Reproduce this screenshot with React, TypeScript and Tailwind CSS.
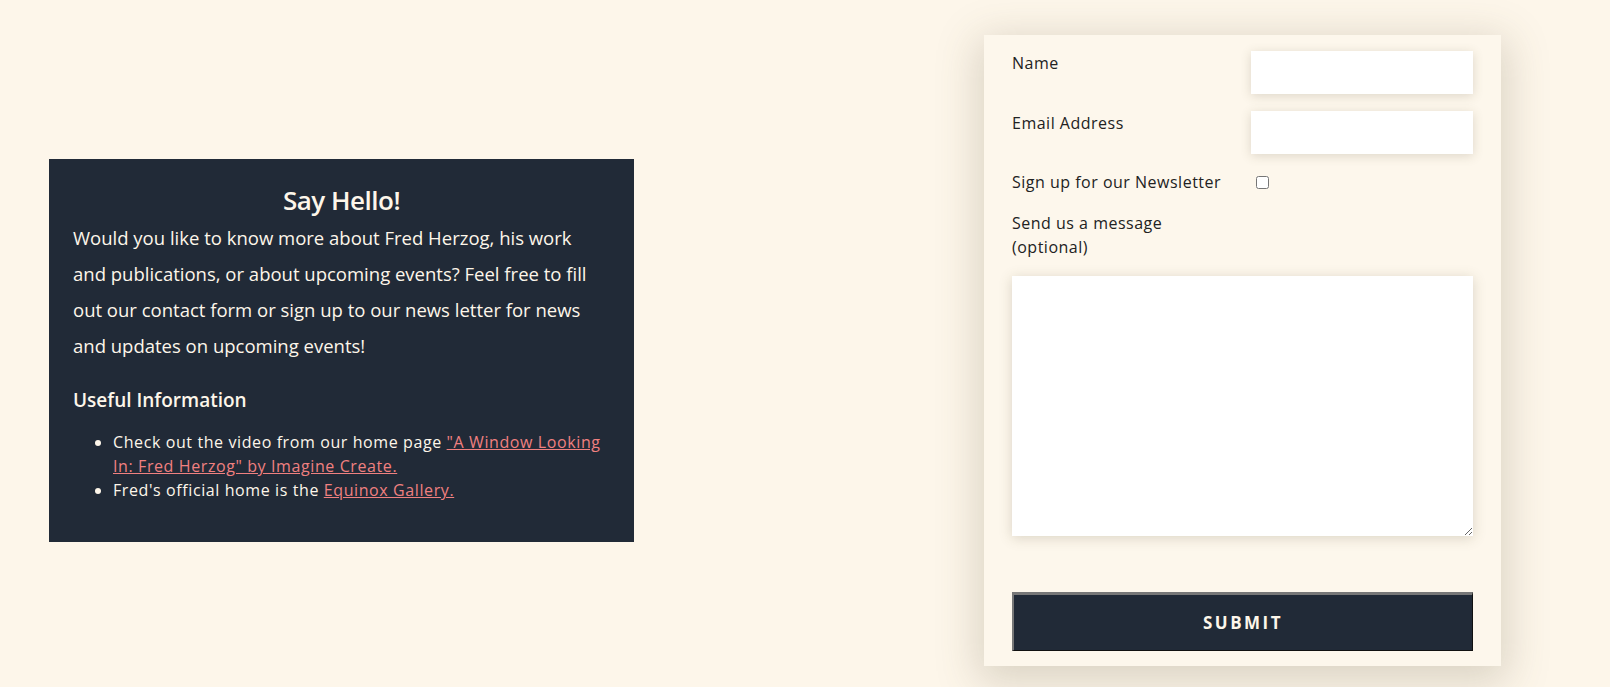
export default function App() {
  return (
    <div className="min-h-[687px] w-full bg-[#fdf6ea] flex items-center justify-between pl-[49px] pr-[109px] pt-[35px] pb-[22px] font-['Open_Sans',sans-serif]">
      <section className="w-[585px] bg-[#212a37] text-[#fdf6ea] px-[24px] pt-[23px] pb-[40px]">
        <h2 className="text-center text-[26px] font-semibold leading-[36px] tracking-[-0.5px]">
          Say Hello!
        </h2>
        <p className="max-w-[525px] text-[18.5px] leading-[36.2px] mt-[2px]">
          Would you like to know more about Fred Herzog, his work and
          publications, or about upcoming events? Feel free to fill out our
          contact form or sign up to our news letter for news and updates on
          upcoming events!
        </p>
        <h3 className="text-[19px] font-semibold mt-[22px] leading-[28px]">
          Useful Information
        </h3>
        <ul className="list-disc pl-[40px] mt-[16px] text-[16px] tracking-[0.6px] leading-[24px]">
          <li>
            Check out the video from our home page{" "}
            <a href="#" className="underline text-[#f08080]">
              "A Window Looking In: Fred Herzog" by Imagine Create.
            </a>
          </li>
          <li>
            Fred's official home is the{" "}
            <a href="#" className="underline text-[#f08080]">
              Equinox Gallery.
            </a>
          </li>
        </ul>
      </section>

      <form className="w-[517px] bg-[#fdf7ec] px-[28px] pt-[16px] pb-[15px] shadow-[0_10px_40px_6px_rgba(95,85,60,0.22)] text-[#222] text-[16px] tracking-[0.5px] leading-[24px]">
        <div className="grid grid-cols-[239px_1fr] gap-y-[17px]">
          <label htmlFor="name">Name</label>
          <input
            id="name"
            type="text"
            className="h-[43px] bg-white shadow-[0_2px_10px_rgba(95,85,60,0.2)] outline-none"
          />
          <label htmlFor="email">Email Address</label>
          <input
            id="email"
            type="email"
            className="h-[43px] bg-white shadow-[0_2px_10px_rgba(95,85,60,0.2)] outline-none"
          />
          <label htmlFor="news" className="-mt-[1px]">
            Sign up for our Newsletter
          </label>
          <div className="pl-[5px]">
            <input
              id="news"
              type="checkbox"
              className="w-[13px] h-[13px] mt-[1px]"
            />
          </div>
        </div>
        <label htmlFor="msg" className="block mt-[16px]">
          Send us a message
          <br />
          (optional)
        </label>
        <textarea
          id="msg"
          className="block w-full h-[260px] mt-[17px] bg-white shadow-[0_2px_12px_rgba(95,85,60,0.22)] outline-none"
        />
        <button
          type="submit"
          className="block w-full h-[59px] mt-[56px] bg-[#212a37] text-[#fdf6ea] font-bold tracking-[2.5px] text-[17px] border-t-[3px] border-l-2 border-t-[#777] border-l-[#777] border-b border-r border-b-[#111] border-r-[#111]"
        >
          SUBMIT
        </button>
      </form>
    </div>
  );
}
